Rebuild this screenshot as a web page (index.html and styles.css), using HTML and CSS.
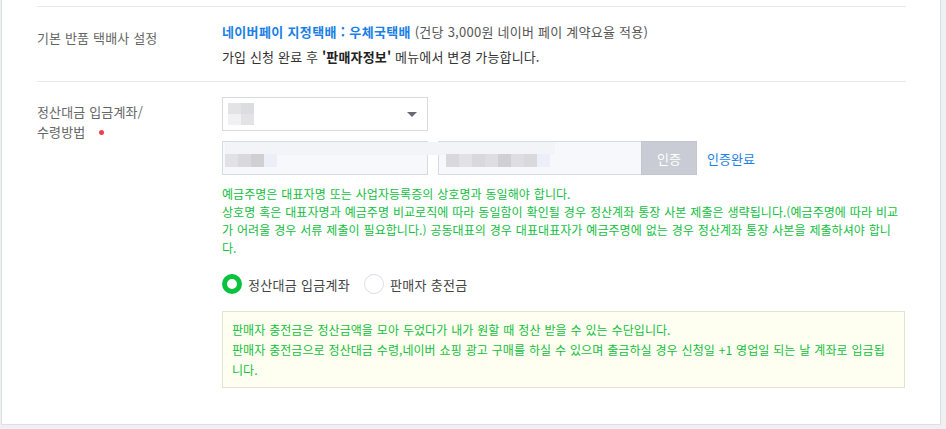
FILE: index.html
```html
<!DOCTYPE html>
<html lang="ko">
<head>
<meta charset="utf-8">
<title>정산 설정</title>
<link rel="stylesheet" href="styles.css">
</head>
<body>
<div class="card">
  <div class="row row-return">
    <div class="label label-return">기본 반품 택배사 설정</div>
    <div class="content">
      <p class="line"><span class="blue">네이버페이 지정택배 : 우체국택배</span> <span class="muted">(건당 3,000원 네이버 페이 계약요율 적용)</span></p>
      <p class="line">가입 신청 완료 후 <b>'판매자정보'</b> 메뉴에서 변경 가능합니다.</p>
    </div>
  </div>
  <div class="row row-account">
    <div class="label label-account">정산대금 입금계좌/<br>수령방법 <span class="req"></span></div>
    <div class="content">
      <div class="select">
        <span class="blur blur-select"><i class="b1"></i><i class="b2"></i><i class="b3"></i><i class="b4"></i></span>
        <span class="caret"></span>
      </div>
      <div class="acct">
        <div class="input input-first">
          <span class="blur-band"></span>
          <span class="blur-row blur-row-1"><i class="c1"></i><i class="c2"></i><i class="c3"></i><i class="c4"></i></span>
        </div>
        <div class="input input-second">
          <span class="blur-band blur-band-2"></span>
          <span class="blur-row blur-row-2"><i class="c2"></i><i class="c1"></i><i class="c2"></i><i class="c5"></i><i class="c3"></i><i class="c5"></i><i class="c2"></i><i class="c4"></i></span>
        </div>
        <button class="btn">인증</button>
        <span class="done">인증완료</span>
      </div>
      <div class="guide">
        <p>예금주명은 대표자명 또는 사업자등록증의 상호명과 동일해야 합니다.</p>
        <p>상호명 혹은 대표자명과 예금주명 비교로직에 따라 동일함이 확인될 경우 정산계좌 통장 사본 제출은 생략됩니다.(예금주명에 따라 비교가 어려울 경우 서류 제출이 필요합니다.) 공동대표의 경우 대표대표자가 예금주명에 없는 경우 정산계좌 통장 사본을 제출하셔야 합니다.</p>
      </div>
      <div class="radios">
        <label class="radio"><span class="dot dot-on"></span>정산대금 입금계좌</label>
        <label class="radio"><span class="dot"></span>판매자 충전금</label>
      </div>
      <div class="notice">
        <p>판매자 충전금은 정산금액을 모아 두었다가 내가 원할 때 정산 받을 수 있는 수단입니다.</p>
        <p>판매자 충전금으로 정산대금 수령,네이버 쇼핑 광고 구매를 하실 수 있으며 출금하실 경우 신청일 +1 영업일 되는 날 계좌로 입금됩니다.</p>
      </div>
    </div>
  </div>
</div>
</body>
</html>
```

FILE: styles.css
```css
* { box-sizing: border-box; }
html, body { margin: 0; padding: 0; }
body {
  background: #eef0f4;
  font-family: "Noto Sans CJK KR", "Noto Sans", sans-serif;
  color: #333;
  width: 946px;
  height: 429px;
  overflow: hidden;
}
p { margin: 0; }

.card {
  width: 940px;
  height: 425px;
  margin-left: 1px;
  background: #fff;
  border-left: 1px solid #dcdfe6;
  border-right: 1px solid #dcdfe6;
  border-bottom: 1px solid #dcdfe6;
  padding: 6px 34px 0 35px;
}

.row {
  display: flex;
  border-top: 1px solid #e5e8ee;
}
.label {
  width: 185px;
  flex: none;
  font-size: 13px;
  color: #666;
  letter-spacing: 0.15px;
}
.content {
  width: 683px;
  flex: none;
}

.row-return { padding: 12px 0 12px; }
.label-return { padding-top: 6px; line-height: 25px; }
.row-return .line {
  font-size: 13px;
  line-height: 25px;
  letter-spacing: 0.15px;
  color: #333;
}
.blue { color: #1a7fe6; font-weight: 700; letter-spacing: 0.35px; }
.muted { color: #555; letter-spacing: 0.25px; }
.row-return b { font-weight: 700; color: #222; }

.row-account { padding: 15px 0 0; border-bottom: 0; }
.label-account { padding-top: 5px; line-height: 20px; }
.req {
  display: inline-block;
  width: 5px;
  height: 5px;
  border-radius: 50%;
  background: #f0404a;
  margin-left: 10px;
  vertical-align: middle;
  position: relative;
  top: -1px;
}

.select {
  position: relative;
  width: 206px;
  height: 34px;
  border: 1px solid #d7dae0;
  background: #fff;
}
.blur { position: absolute; display: grid; grid-template-columns: 13px 13px; grid-template-rows: 11px 11px; }
.blur-select { left: 5px; top: 5px; }
.blur i { display: block; }
.b1 { background: #e3e3e6; }
.b2 { background: #dcdde1; }
.b3 { background: #f1f1f3; }
.b4 { background: #e3e3e7; }
.caret {
  position: absolute;
  right: 10px;
  top: 14px;
  width: 0; height: 0;
  border-left: 5px solid transparent;
  border-right: 5px solid transparent;
  border-top: 5px solid #666a72;
}

.acct {
  display: flex;
  align-items: center;
  margin-top: 10px;
  height: 34px;
}
.input {
  position: relative;
  height: 34px;
  border: 1px solid #d7dae0;
  background: #f7f8fb;
}
.input-first { width: 206px; }
.input-second { width: 203px; margin-left: 10px; border-right: 0; }
.blur-band {
  position: absolute;
  left: 2px; top: 0;
  width: 214px; height: 13px;
  background: #f3f4f8;
  z-index: 1;
}
.blur-band-2 { left: -24px; width: 140px; }
.blur-row { position: absolute; top: 12px; display: flex; height: 13px; z-index: 2; }
.blur-row i { display: block; width: 13px; height: 13px; }
.blur-row-1 { left: 2px; }
.blur-row-2 { left: 7px; }
.c1 { background: #e2e2e6; }
.c2 { background: #d8d8dd; }
.c3 { background: #cfcfd4; }
.c4 { background: #eceff7; }
.c5 { background: #dedde2; }

.btn {
  width: 56px;
  height: 34px;
  border: 1px solid #c3c6ce;
  background: #c9ccd4;
  color: #fff;
  font-family: inherit;
  font-size: 13px;
  padding: 0;
}
.done {
  margin-left: 10px;
  font-size: 13px;
  color: #1a7fe6;
}

.guide {
  margin-top: 10px;
  font-size: 12px;
  line-height: 18px;
  color: #10c040;
  letter-spacing: 0.05px;
  word-spacing: 0.5px;
}

.radios {
  display: flex;
  align-items: center;
  margin-top: 17px;
  height: 20px;
}
.radio {
  display: flex;
  align-items: center;
  font-size: 13px;
  color: #444;
  letter-spacing: 0.3px;
  margin-right: 14px;
}
.dot {
  width: 20px;
  height: 20px;
  border-radius: 50%;
  border: 1px solid #dcdee3;
  background: #fff;
  margin-right: 6px;
}
.dot-on { border: 5px solid #09c23d; }

.notice {
  margin-top: 17px;
  border: 1px solid #e2e3d3;
  background: #fefff0;
  padding: 8px 9px 7px;
  font-size: 12px;
  line-height: 20px;
  color: #10c040;
  letter-spacing: 0.05px;
  word-spacing: 0.5px;
}
```
